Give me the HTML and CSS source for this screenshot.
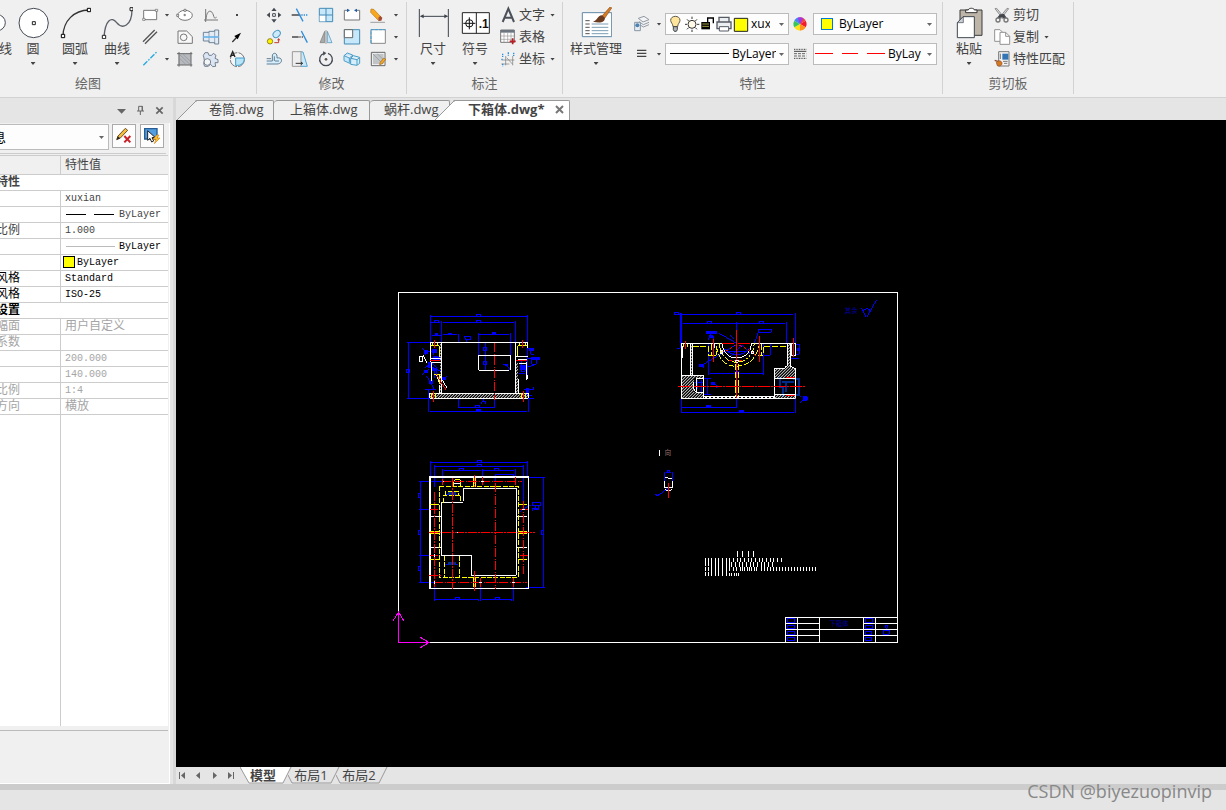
FILE: index.html
```html
<!DOCTYPE html>
<html lang="zh-CN">
<head>
<meta charset="utf-8">
<title>下箱体.dwg</title>
<link rel="stylesheet" href="styles.css">
</head>
<body>
<header class="ribbon">
  <section class="group group-draw">
    <div class="tools">
      <button class="big big-cut"><svg width="12" height="32" viewBox="0 21 36 96"><circle cx="-8" cy="68" r="24" fill="#fff" stroke="#444a54" stroke-width="3"/></svg><span class="cut-label">线</span></button>
      <button class="big"><svg width="32" height="32" viewBox="51 21 96 96"><circle cx="101" cy="69" r="44" fill="#fff" stroke="#444a54" stroke-width="3"/><path d="M97 65h9v9h-9z" fill="#fff" stroke="#222" stroke-width="3"/></svg><span>圆</span><i class="caret"></i></button>
      <button class="big"><svg width="32" height="32" viewBox="177 21 96 96"><path d="M189 108C190 62 222 31 267 30" fill="none" stroke="#333" stroke-width="4"/><path d="M184 103h10v10h-10zM262 25h10v10h-10z" fill="#fff" stroke="#000" stroke-width="3"/></svg><span>圆弧</span><i class="caret"></i></button>
      <button class="big"><svg width="32" height="32" viewBox="303 21 96 96"><path d="M312 110C316 60 334 48 350 68S396 80 396 28" fill="none" stroke="#5b6068" stroke-width="4"/><path d="M307 106h10v10h-10zM390 23h9v9h-9z" fill="#fff" stroke="#222" stroke-width="3"/></svg><span>曲线</span><i class="caret"></i></button>
      <div class="icons icons-draw">
        <button aria-label="矩形"><svg class="ic" viewBox="423 18 54 54"><path d="M431 31h39v28h-39z" fill="#fff" stroke="#777" stroke-width="3"/><path d="M428 55h7v6h-7zM466 28h7v6h-7z" fill="#fff" stroke="#666" stroke-width="2"/></svg></button>
        <i class="caret"></i>
        <button aria-label="椭圆"><svg class="ic" viewBox="528 18 54 54"><ellipse cx="555" cy="46" rx="22" ry="15" fill="#fff" stroke="#777" stroke-width="3"/><path d="M552 28h6v6h-6zM530 43h6v6h-6zM552 43h4v4h-4z" fill="#fff" stroke="#555" stroke-width="2"/></svg></button>
        <button aria-label="公式曲线"><svg class="ic" viewBox="606 18 54 54"><path d="M617 27v39M612 60h42M618 58C620 28 635 28 640 45S646 51 650 52" fill="none" stroke="#777" stroke-width="3"/></svg></button>
        <button aria-label="点"><svg class="ic" viewBox="684 18 54 54"><path d="M708 42h6v6h-6z" fill="#444"/></svg></button>
        <button aria-label="平行线"><svg class="ic" viewBox="423 84 54 54"><path d="M429 125l35-35M435 131l36-36" stroke="#555" stroke-width="4"/></svg></button>
        <i></i>
        <button aria-label="孔"><svg class="ic" viewBox="528 84 54 54"><path d="M534 93h26l17 17v20h-43z" fill="#f8f8f8" stroke="#777" stroke-width="3"/><circle cx="551" cy="112" r="10" fill="none" stroke="#777" stroke-width="3"/></svg></button>
        <button aria-label="轴"><svg class="ic" viewBox="606 84 54 54"><path d="M610 97h17v-3h17v-4h12v42h-12v-4h-17v-5h-17z" fill="#e3ecf4" stroke="#6f8498" stroke-width="3"/><path d="M627 95v32M644 91v40" stroke="#6f8498" stroke-width="2"/><path d="M609 111h48" stroke="#69b4ea" stroke-width="5"/></svg></button>
        <button aria-label="箭头"><svg class="ic" viewBox="684 84 54 54"><path d="M697 126l14-15" stroke="#333" stroke-width="4"/><path d="M723 98l-20 10 10 10z" fill="#000"/></svg></button>
        <button aria-label="中心线"><svg class="ic" viewBox="423 150 54 54"><path d="M430 196l40-40" stroke="#25a9e0" stroke-width="4" stroke-dasharray="17 4 5 4"/></svg></button>
        <i class="caret"></i>
        <button aria-label="剖面线"><svg class="ic" viewBox="528 150 54 54"><path d="M536 161h37v34h-37z" fill="#b6b9bd"/><path d="M537 156v44M573 156v44M531 161h46M531 195h46" stroke="#666" stroke-width="3"/><path d="M538 163l33 31M549 163l22 21M538 174l20 20" stroke="#8f9399" stroke-width="2"/></svg></button>
        <button aria-label="齿轮"><svg class="ic" viewBox="606 150 54 54"><path d="M615 158h9l3 8h8l5-6 8 6-3 9 9 4v9h-9l2 11-9 1-6-7-8 6h-10l-3-8 2-8-1-9-2-8z" fill="#dbe6f2" stroke="#758292" stroke-width="3"/><circle cx="622" cy="186" r="10" fill="#f5f5f5" stroke="#758292" stroke-width="3"/></svg></button>
        <button aria-label="局部放大"><svg class="ic" viewBox="684 150 54 54"><circle cx="712" cy="179" r="21" fill="#f5f5f5" stroke="#777" stroke-width="3" stroke-dasharray="30 4"/><path d="M707 174h26c0 14-8 24-26 22z" fill="#b8e4f8" stroke="#3f9dcc" stroke-width="3"/><path d="M691 171l7-16 7 16M693 166h9" fill="none" stroke="#222" stroke-width="4"/></svg></button>
      </div>
    </div>
    <h2>绘图</h2>
  </section>

  <section class="group group-modify">
    <div class="tools">
      <div class="icons icons-modify">
        <button aria-label="移动"><svg class="ic" viewBox="27 18 54 54"><path d="M54 23l8 10H46zM54 68l8-10H46zM32 45l10-8v16zM76 45l-10-8v16z" fill="#444a54"/><path d="M50 41h8v8h-8z" fill="#fff" stroke="#444a54" stroke-width="3"/></svg></button>
        <button aria-label="裁剪"><svg class="ic" viewBox="105 18 54 54"><path d="M107 45h26" stroke="#333" stroke-width="4"/><path d="M136 45h20" stroke="#2c8ddb" stroke-width="4" stroke-dasharray="4 3"/><path d="M121 26l20 38" stroke="#2c8ddb" stroke-width="4"/></svg></button>
        <button aria-label="阵列"><svg class="ic" viewBox="183 18 54 54"><path d="M190 25h40v40h-40z" fill="#c7e8fa" stroke="#458bb5" stroke-width="3"/><path d="M191 46h18v18h-18z" fill="#fff"/><path d="M210 25v40M190 45h40" stroke="#458bb5" stroke-width="3"/></svg></button>
        <button aria-label="打断"><svg class="ic" viewBox="261 18 54 54"><path d="M277 31h-12v29h46V31h-12" fill="#fff" stroke="#777" stroke-width="3"/><path d="M273 26l9 5-9 6zM303 26l-9 5 9 6z" fill="#1d5fa5"/></svg></button>
        <button aria-label="删除"><svg class="ic" viewBox="339 18 54 54"><path d="M345 27l8 1 24 25-9 9-24-25z" fill="#f7a81c" stroke="#b87412" stroke-width="2"/><path d="M367 53l6-6 6 7-3 8-8 1z" fill="#a54c39"/><path d="M343 67h44" stroke="#777" stroke-width="2"/></svg></button>
        <i class="caret"></i>
        <button aria-label="平移复制"><svg class="ic" viewBox="27 84 54 54"><ellipse cx="62" cy="102" rx="12" ry="9" transform="rotate(-40 62 102)" fill="#cceafa" stroke="#4d9ac5" stroke-width="3"/><circle cx="42" cy="124" r="8" fill="#fff200" stroke="#99871d" stroke-width="3"/><path d="M55 128h13v-9" fill="none" stroke="#c23b32" stroke-width="3"/><path d="M68 114l5 7H63z" fill="#c23b32"/></svg></button>
        <button aria-label="延伸"><svg class="ic" viewBox="105 84 54 54"><path d="M108 111h20" stroke="#333" stroke-width="4"/><path d="M130 111h14" stroke="#555" stroke-width="4" stroke-dasharray="4 3"/><path d="M136 93l18 35" stroke="#2c8ddb" stroke-width="4"/></svg></button>
        <button aria-label="镜像"><svg class="ic" viewBox="183 84 54 54"><path d="M206 94v34h-14z" fill="#aaa" stroke="#777" stroke-width="2"/><path d="M214 94v34h14z" fill="#c7e8fa" stroke="#458bb5" stroke-width="2"/><path d="M210 90v42" stroke="#777" stroke-width="2"/></svg></button>
        <button aria-label="缩放"><svg class="ic" viewBox="261 84 54 54"><path d="M265 89h46v43h-46z" fill="#c7e8fa" stroke="#458bb5" stroke-width="3"/><path d="M265 89h25v24h-25z" fill="#fff" stroke="#666" stroke-width="3"/></svg></button>
        <button aria-label="拉伸"><svg class="ic" viewBox="339 84 54 54"><path d="M345 89h43v41h-43z" fill="#fff" stroke="#888" stroke-width="3"/><path d="M345 130V89h43" fill="none" stroke="#39a0dc" stroke-width="3" stroke-dasharray="10 3"/></svg></button>
        <i class="caret"></i>
        <button aria-label="等距线"><svg class="ic" viewBox="27 150 54 54"><path d="M32 183h17v-15c0-11 14-11 14 1v5c18-4 18 18 0 18H32" fill="#d7edf9" stroke="#5f7e96" stroke-width="3"/><path d="M32 176h13M55 183v-14M57 183h12" stroke="#5f7e96" stroke-width="3"/></svg></button>
        <button aria-label="拉伸角"><svg class="ic" viewBox="105 150 54 54"><path d="M134 155l7 1 13 43h-20" fill="#c7e8fa" stroke="#58a6cf" stroke-width="3"/><path d="M109 155h26v44h-26z" fill="#eee" stroke="#999" stroke-width="3"/><path d="M119 190h20M135 186l5 4-5 4" fill="none" stroke="#333" stroke-width="3"/></svg></button>
        <button aria-label="旋转"><svg class="ic" viewBox="183 150 54 54"><path d="M204 160a19 19 0 1 0 12 0" fill="none" stroke="#444a54" stroke-width="4"/><path d="M201 154l10 5-9 8z" fill="#444a54"/><circle cx="210" cy="178" r="4" fill="#555"/></svg></button>
        <button aria-label="分解"><svg class="ic" viewBox="261 150 54 54"><path d="M264 167l10-8 16 6v19l-9 6-17-8zM264 167l16 7 10-8M280 174v14" fill="#c7e8fa" stroke="#4b9dc8" stroke-width="3"/><path d="M284 175l8-8 19 5v18l-8 6-19-3zM284 175l19 4 8-6M303 179v16" fill="#d8effb" stroke="#4b9dc8" stroke-width="3"/></svg></button>
        <button aria-label="编辑剖面线"><svg class="ic" viewBox="339 150 54 54"><path d="M346 157h41v40h-41z" fill="#fff" stroke="#666" stroke-width="3"/><path d="M350 161h33v32h-33z" fill="#c1c4c7"/><path d="M350 161l30 30M364 161l18 18" stroke="#8f9399" stroke-width="2"/><path d="M372 188l11-14 6 4-10 13-8 3z" fill="#f7a81c" stroke="#9b6728" stroke-width="2"/></svg></button>
        <i class="caret"></i>
      </div>
    </div>
    <h2>修改</h2>
  </section>

  <section class="group group-note">
    <div class="tools">
      <button class="big"><svg width="32" height="32" viewBox="483 21 96 96"><path d="M490 27v84M577 27v84M494 49h80" stroke="#3d434c" stroke-width="3"/><path d="M492 49l11-6v12zM576 49l-11-6v12z" fill="#3d434c"/></svg><span>尺寸</span><i class="caret"></i></button>
      <button class="big"><svg width="32" height="32" viewBox="609 21 96 96"><path d="M619 38h81v62h-81zM661 38v62" fill="#fff" stroke="#222" stroke-width="3"/><circle cx="640" cy="70" r="11" fill="none" stroke="#111" stroke-width="3"/><path d="M622 70h36M640 52v36" stroke="#111" stroke-width="3"/><text x="668" y="84" class="symbol-text">.1</text></svg><span>符号</span><i class="caret"></i></button>
      <div class="list">
        <button><svg class="ic" viewBox="729 18 54 54"><path d="M740 66l17-40 17 40M746 53h22" fill="none" stroke="#4c5058" stroke-width="6"/></svg><span>文字</span><i class="caret"></i></button>
        <button><svg class="ic" viewBox="729 84 54 54"><path d="M734 90h41v37h-41z" fill="#fff" stroke="#777" stroke-width="3"/><path d="M734 90h41v8h-41z" fill="#6c7580"/><path d="M744 98v29M755 98v29M765 98v29M734 108h41M734 118h41" stroke="#999" stroke-width="2"/><path d="M770 115v18M761 124h18" stroke="#b81e26" stroke-width="5"/></svg><span>表格</span></button>
        <button><svg class="ic" viewBox="729 150 54 54"><path d="M739 180h36M749 168v28M736 192h24M752 173l18 20M770 168v28" fill="none" stroke="#777" stroke-width="2"/><path d="M740 161v10M757 157v10M773 158v10M738 176v5M740 191v8" stroke="#2c8ddb" stroke-width="4" stroke-dasharray="5 2"/></svg><span>坐标</span><i class="caret"></i></button>
      </div>
    </div>
    <h2>标注</h2>
  </section>

  <section class="group group-props">
    <div class="tools">
      <button class="big big-wide"><svg width="32" height="32" viewBox="60 21 96 96"><path d="M67 38h88v72H67z" fill="#fff" stroke="#6088a5" stroke-width="3"/><path d="M76 62h13M76 72h13M76 82h13M76 92h13M76 101h13" stroke="#555" stroke-width="3"/><path d="M95 72h50M95 82h50M95 92h50M95 101h50" stroke="#7b9db5" stroke-width="3"/><path d="M151 20l4 4-21 31-8-7z" fill="#d97b22" stroke="#88501f" stroke-width="2"/><path d="M126 46l9 8c-2 16-18 15-36 11 14-3 12-18 27-19z" fill="#6b3b20"/></svg><span>样式管理</span><i class="caret"></i></button>
      <div class="prop-grid">
        <button aria-label="图层"><svg class="ic" viewBox="216 45 54 54"><path d="M235 55l17-6 15 10-18 7zM237 65l13 9 17-7M237 72l13 9 17-7" fill="#f2f4f6" stroke="#9299a3" stroke-width="3"/><path d="M224 67h17v25h-17z" fill="#e6edf3" stroke="#8996a3" stroke-width="3"/><circle cx="232" cy="76" r="6" fill="#4d83b3"/></svg></button>
        <i class="caret"></i>
        <div class="combo"><svg width="83" height="20" viewBox="318 42 249 60"><path d="M339 80c0-9-7-12-7-19 0-16 28-16 28 0 0 7-7 10-7 19z" fill="#ffe49b" stroke="#5d594e" stroke-width="3"/><path d="M340 80h12v9l-3 5h-6l-3-5z" fill="#b0b5b9" stroke="#444" stroke-width="3"/><circle cx="396" cy="73" r="12" fill="#fffbe8" stroke="#333" stroke-width="3"/><path d="M396 50v7M396 89v7M375 73h6M411 73h7M381 58l5 5M411 58l-5 5M381 88l5-5M411 88l-5-5" stroke="#333" stroke-width="3"/><path d="M424 66h26v22h-26z" fill="#000"/><path d="M427 72h20M427 79h20" stroke="#f2e85a" stroke-width="2"/><path d="M443 67V54h17v16" fill="none" stroke="#000" stroke-width="4"/><path d="M477 67V52h30v15M471 66h42v20h-42z" fill="#eceff1" stroke="#555b62" stroke-width="4"/><path d="M478 80h28v13h-28z" fill="#fff" stroke="#555b62" stroke-width="3"/><path d="M523 55h40v39h-40z" fill="#ff0" stroke="#222" stroke-width="3"/></svg><select class="select select-layer" aria-label="当前图层"><option>xuxian</option></select></div>
        <button aria-label="颜色"><svg class="ic" viewBox="696 45 54 54"><g transform="translate(720 72)"><path d="M0 0V-20A20 20 0 0 1 17-10Z" fill="#ef4444"/><path d="M0 0L17-10A20 20 0 0 1 17 10Z" fill="#f21b2b"/><path d="M0 0L17 10A20 20 0 0 1 0 20Z" fill="#ff941c"/><path d="M0 0V20A20 20 0 0 1-17 10Z" fill="#ffe11a"/><path d="M0 0L-17 10A20 20 0 0 1-17-10Z" fill="#37c657"/><path d="M0 0L-17-10A20 20 0 0 1 0-20Z" fill="#4288f5"/><path d="M0 0L-7-19A20 20 0 0 1 10-17Z" fill="#a437e4"/></g></svg></button>
        <div class="combo"><i class="swatch"></i><select class="select" aria-label="当前颜色"><option>ByLayer</option></select></div>
        <button aria-label="线宽"><svg class="ic" viewBox="216 135 54 54"><path d="M231 151h28M231 160h28M231 169h28" stroke="#444" stroke-width="4"/></svg></button>
        <i class="caret"></i>
        <div class="combo"><svg width="64" height="20" viewBox="0 0 64 20"><path d="M4 9h59v1H4z"/></svg><select class="select" aria-label="当前线宽"><option>ByLayer</option></select></div>
        <button aria-label="线型"><svg class="ic" viewBox="696 135 54 54"><path d="M702 148h37M702 175h37" stroke="#444" stroke-width="3" stroke-dasharray="3 2"/><path d="M702 154h37" stroke="#444" stroke-width="3"/><path d="M702 161h37M702 168h37" stroke="#666" stroke-width="3" stroke-dasharray="9 3"/></svg></button>
        <div class="combo"><svg width="72" height="20" viewBox="0 0 72 20"><path d="M1 9h18v1H1zM28 9h16v1H28zM53 9h18v1H53z" fill="red"/></svg><select class="select select-type" aria-label="当前线型"><option>ByLayer</option></select></div>
      </div>
    </div>
    <h2>特性</h2>
  </section>

  <section class="group group-clip">
    <div class="tools">
      <button class="big"><svg width="32" height="32" viewBox="69 21 96 96"><path d="M90 30h66v76H90z" fill="#bdb5a7" stroke="#3c3c3c" stroke-width="3"/><path d="M107 38v-8h8c0-7 18-7 18 0h8v8z" fill="#fff" stroke="#333" stroke-width="3"/><path d="M99 50h34v63H82V68z" fill="#fff" stroke="#3d4650" stroke-width="3"/><path d="M82 68l18-18v18z" fill="#ccd0d4" stroke="#3d4650" stroke-width="2"/></svg><span>粘贴</span><i class="caret"></i></button>
      <div class="list">
        <button><svg class="ic" viewBox="189 18 54 54"><path d="M195 26l5-1 23 28-5 3zM236 26l-5-1-23 28 5 3z" fill="#d6d8da" stroke="#666" stroke-width="2"/><path d="M210 43l12-1 8 11-7 3-8-5-8 5-6-3z" fill="#43474d"/><circle cx="204" cy="60" r="6" fill="#f3f3f3" stroke="#777" stroke-width="4"/><circle cx="228" cy="60" r="6" fill="#f3f3f3" stroke="#777" stroke-width="4"/></svg><span>剪切</span></button>
        <button><svg class="ic" viewBox="189 84 54 54"><path d="M194 89h16l9 9v26h-25z" fill="#fff" stroke="#929292" stroke-width="3"/><path d="M210 97h17l12 12v24h-29z" fill="#fff" stroke="#929292" stroke-width="3"/><path d="M227 97v12h12" fill="none" stroke="#929292" stroke-width="3"/></svg><span>复制</span><i class="caret"></i></button>
        <button><svg class="ic" viewBox="189 150 54 54"><path d="M206 155h31v43h-31z" fill="#f4f4f4" stroke="#777" stroke-width="3"/><path d="M217 161h18v18h-18z" fill="#3175b5"/><path d="M219 184h14M222 190h10M211 161v16" stroke="#777" stroke-width="3"/><path d="M194 181l12 4" stroke="#8c4935" stroke-width="4"/><path d="M199 187c8-8 16-4 17 2s-7 12-14 8z" fill="#d57920" stroke="#854829" stroke-width="2"/></svg><span>特性匹配</span></button>
      </div>
    </div>
    <h2>剪切板</h2>
  </section>
</header>

<main class="work">
  <aside class="panel">
    <div class="panel-bar">
      <button aria-label="菜单"><svg width="13" height="13" viewBox="345 27 39 39"><path d="M351 42h27l-13 14z" fill="#666"/></svg></button>
      <button aria-label="固定"><svg width="13" height="13" viewBox="402 27 39 39"><path d="M416 48V34h11v14M411 48h21M421 48v12" fill="none" stroke="#666" stroke-width="3"/><path d="M425 33h3v15h-3z" fill="#666"/></svg></button>
      <button aria-label="关闭"><svg width="13" height="13" viewBox="459 27 39 39"><path d="M469 37l19 19M488 37l-19 19" stroke="#666" stroke-width="5"/></svg></button>
    </div>
    <div class="panel-body">
      <div class="filter">
        <select class="select filter-select" aria-label="选择信息"><option>息</option></select>
        <button class="tool" aria-label="清除"><svg width="22" height="22" viewBox="339 90 66 66"><path d="M350 134l4-11 22-23 7 6-22 23z" fill="#f6bd3c" stroke="#6f5228" stroke-width="3"/><path d="M350 134l3-10 8 6z" fill="#222"/><path d="M373 123l18 19M391 123l-18 19" stroke="#c92127" stroke-width="6"/></svg></button>
        <button class="tool" aria-label="快速选择"><svg width="22" height="22" viewBox="423 90 66 66"><path d="M434 101h37v31h-37z" fill="#539de0" stroke="#255b93" stroke-width="4"/><path d="M443 107v29l7-6 5 11 6-3-5-10 9-1z" fill="#fff" stroke="#222" stroke-width="3"/><path d="M470 120l-11 13h9l-5 13 17-17h-9l6-9z" fill="#ffc329" stroke="#d38219" stroke-width="2"/></svg></button>
      </div>
      <div class="sheet">
        <table class="props">
          <colgroup><col class="col-name"><col></colgroup>
          <tr class="head"><th></th><th>特性值</th></tr>
          <tr class="section mid"><td colspan="2">特性</td></tr>
          <tr class="mid"><td></td><td>xuxian</td></tr>
          <tr class="mid"><td></td><td><svg class="line" width="50" height="3" viewBox="0 0 50 3"><path d="M1 1h20v1H1zM29 1h20v1H29z"/></svg> ByLayer</td></tr>
          <tr class="mid"><td>比例</td><td>1.000</td></tr>
          <tr><td></td><td><svg class="line" width="50" height="3" viewBox="0 0 50 3"><path d="M1 1h49v1H1z" fill="#bbb"/></svg> ByLayer</td></tr>
          <tr><td></td><td class="with-color"><i class="color"></i>ByLayer</td></tr>
          <tr><td>风格</td><td>Standard</td></tr>
          <tr><td>风格</td><td>ISO-25</td></tr>
          <tr class="section"><td colspan="2">设置</td></tr>
          <tr class="off"><td>幅面</td><td class="cjk">用户自定义</td></tr>
          <tr class="off"><td>系数</td><td></td></tr>
          <tr class="off"><td></td><td>200.000</td></tr>
          <tr class="off"><td></td><td>140.000</td></tr>
          <tr class="off"><td>比例</td><td>1:4</td></tr>
          <tr class="off"><td>方向</td><td class="cjk">横放</td></tr>
        </table>
      </div>
      <div class="hint"></div>
    </div>
  </aside>

  <section class="doc">
    <nav class="tabs">
      <svg class="slant" width="20" height="20" viewBox="0 0 20 20"><path d="M0 20L19 1H20V20z" fill="#f0f0f0"/><path d="M0 20L19 1M19 0h1v1h-1z" fill="#999" stroke="#999"/></svg>
      <button class="tab tab-first">卷筒.dwg</button>
      <button class="tab tab-second">上箱体.dwg</button>
      <button class="tab tab-third">蜗杆.dwg</button>
      <svg class="slant slant-active" width="20" height="20" viewBox="0 0 20 20"><path d="M0 20L19 1H20V20z" fill="#fff"/><path d="M0 20L19 1M19 0h1v1h-1z" fill="#999" stroke="#999"/></svg>
      <button class="tab tab-active">下箱体.dwg*<svg width="9" height="9" viewBox="0 0 9 9"><path d="M1 1l7 7M8 1l-7 7" stroke="#777" stroke-width="2"/></svg></button>
    </nav>

    <div class="canvas">
      <svg class="drawing" viewBox="176 120 1050 647" preserveAspectRatio="xMinYMin meet" shape-rendering="crispEdges">
        <defs>
          <pattern id="hatch" width="9" height="9" patternUnits="userSpaceOnUse"><path d="M-1 10L10-1" stroke="#fff" stroke-width="3"/></pattern>
          <g id="tag"><path d="M-6 4V-3H6V4" fill="none" stroke="#00f" stroke-width="3"/></g>
        </defs>
        <path class="w1" d="M398.500 292.500h499v350h-499z"/>

        <g transform="translate(395 285) scale(.33333) translate(.5 .5)">
          <g class="b">
            <path d="M106 91V172M397 91V172M106 94H397M139 109V172M361 109V172M106 112H136M145 112H358M112 151H139M145 148H186M190 148V172M250 145V256M346 145V214M250 148H343M271 175V256M40 172V341M36 172H106M36 340H418M100 316V382M400 341V382M106 379H397M190 341V370M298 341V370M190 367H298M397 175V270"/>
            <path d="M82 190l9 7v12M91 199h36M115 193v16M133 190v35M82 268l20-16M91 247l20-12 14 12v22M95 274l12 18 11 24M91 314h32M118 250v28M136 286l20-12M97 240l45 20M324 238h8l10 10v8M397 190h10v18h10M400 220h32M410 215v22h14v-12M379 228v30h12v-18M373 264h18M397 245l20-5M388 313h28v-6M400 310v20h12M208 154h18v10h-15zM214 164v8M260 358v-8h12v8M265 350v-8"/>
          </g>
          <g fill="#00f"><path d="M292 142h12v8h-12zM244 372h14v9h-14zM160 144h12v6h-12zM120 144h10v6h-10zM88 194h10v14h-10zM112 192h14v12h-14zM114 214h20v10h-20zM98 232h14v16h-14zM412 216h24v8h-24zM376 240h14v14h-14zM394 310h8v20h-8zM102 284h12v14h-12zM112 248h10v10h-10zM88 256h10v8h-10zM402 190h14v8h-14zM330 236h8v8h-8zM140 276h12v8h-12z"/></g>
          <use href="#tag" x="250" y="91"/><use href="#tag" x="123" y="109"/><use href="#tag" x="250" y="109"/><use href="#tag" x="246" y="364"/>
          <path class="b" d="M34 253h8v10h-8zM265 187h8v10h-8zM265 229h8v10h-8z"/>
          <path fill="url(#hatch)" d="M104 325h296v15H104zM134 172h7v153h-7zM361 235h9v90h-9z"/>
          <path class="w" d="M106 172H400M106 172V232M139 172V325M134 300V325M106 325H400M103 325V340M104 340H400V325M361 172V325M370 283V325M397 172V190M397 270V283H394V230M109 220h30M109 232h30M361 214h39M370 223h27M373 235h24M109 235v52M124 268l10 30M131 268l24 40M73 214h10v15H73zM84 211l12 24M250 211H345V220M250 211V253L255 256H343L347 250V220"/>
          <path class="y" d="M108 181h22l4 6v30M112 175v8M127 175v8M367 214v-30l4-3h24M374 175v8M391 175v8M118 268h15v30M109 325v15M121 325v15M379 325v15M391 325v15"/>
          <path class="r" d="M118 166v22M382 166v22M106 226h30M364 226h32M115 318v33M385 318v33M124 268l28 46"/><path class="r" stroke-dasharray="27 4 4 4" d="M298 175V346"/>
        </g>

        <g transform="translate(660 285) scale(.33333) translate(.5 .5)">
          <path class="b" d="M42 88H400M63 85V384M68 115H376M229 112V370M379 112V175M406 85V175M406 341V384M66 382H401M66 367H230M145 178V270M310 178V270M150 265H310M331 178V211H310M178 145l52 30M229 178l-110 66M120 238l12 10M294 133h39v9h-39zM294 142l-12 34M210 150l12 12M138 140h32M150 140v20M142 166l8-12h10v12M60 175v15h-8M190 190q40 40 80 0M204 200h52M214 210l32-30M247 180l25 28M132 280h20M132 328h20M142 280v48M152 296h14l5 14M108 284h20v38M118 290v20M408 178h10v30h-14M394 220h22M416 330l8 6M420 352l8-8h16M428 335h14v10h-14"/>
          <path d="M138 138h32v9h-32zM412 188h7v9h-7zM226 258h10v8h-10zM138 360h15v8h-15zM237 375h15v8h-15zM59 85h6v91h-6zM148 150h12v10h-12zM118 238h14v8h-14zM428 335h14v9h-14zM152 292h14v8h-14z" fill="#00f"/>
          <use href="#tag" x="49" y="85"/><use href="#tag" x="235" y="85"/><use href="#tag" x="148" y="112"/><use href="#tag" x="304" y="112"/>
          <path d="M360 276v30h10v30M366 290h36M378 290v30M400 282h16v48h-14" fill="none" stroke="#002a8c" stroke-width="6"/>
          <path fill="url(#hatch)" d="M65 272h66v68H65zM344 250h63v30h-63zM344 328h63v14h-63zM91 178h7v94h-7zM381 178h12v72h-12z"/>
          <path d="M102 280h28v42h-28z"/>
          <path class="b" d="M104 292h24M112 286v26M124 284v36"/>
          <path class="w" d="M64 175H187M273 175H408M64 175V340H406V328M67 184V220M91 178V272M97 178V272M64 271H131V334M109 280h22M109 280v42h22M100 290v20l9 12M131 334H343M131 340v-6M343 340V250H375V244H382V178M391 178V244L406 250V340M394 178V211H408M406 175V210M344 280H406M344 328H406M187 178C190 232 270 232 273 178M163 178v10"/>
          <path d="M136 340H344" stroke="#fff" stroke-width="3"/>
          <path d="M136 337H344" stroke="#fff" stroke-width="3" stroke-dasharray="6 6"/>
          <path class="y" stroke-dasharray="18 5" d="M98 184H145V211H169V184M178 175C181 250 277 250 282 175M169 184C181 275 290 250 294 184M294 211H310V184H380M227 238V334M235 238V334M154 178v32M304 178v32M70 178v8M83 178v8"/>
          <path class="r" stroke-dasharray="36 4 4 4" d="M54 304H438M187 175H270"/><path class="r" d="M229 136V340M160 162V232M298 154V232M76 168V192M400 160V215M378 277H406M378 331H406"/><path class="r" stroke-dasharray="9 5" d="M184 204l40-24M238 180l40 24M208 225h42M280 205l8 8"/>
          <path class="w" d="M180 196h8v8h-8zM274 198h7v7h-7zM227 225h7v7h-7z"/>
          <path class="b" d="M604 69l15 28 30-52M610 82c-2-14 20-16 20-2"/>
          <text x="554" y="84" class="cad-text">其余</text>
        </g>

        <g transform="translate(395 450) scale(.33333) translate(.5 .5)">
          <path class="b" d="M106 34V84M397 34V84M106 37H397M118 46V112M385 46V180M118 49H385M142 58V98M361 58V98M148 61H258M265 61H358M262 58V92M301 73H356V78M301 73V95M76 95V397M72 94H142M72 178H118M72 316H118M72 397H118M446 83V412M394 83H450M394 412H450M118 400V452M256 400V452M355 400V452M121 448H251V452M260 448H350V452M373 185l20-13 15-7M412 157h25v10h-24zM420 166v15M430 166v14M412 184v-8h18M150 132h36M148 343h42"/>
          <use href="#tag" x="254" y="34"/><use href="#tag" x="254" y="46"/><use href="#tag" x="200" y="58"/><use href="#tag" x="305" y="58"/><use href="#tag" x="187" y="445"/><use href="#tag" x="306" y="445"/>
          <path class="b" d="M78 130h-8v13h8M78 241h-8v13h8M78 349h-8v12h8M447 241h-8v13h8M324 72h12M416 178h14"/>
          <path d="M162 126h18v8h-18zM160 337h22v6h-22z" fill="#002a8c" stroke="#002a8c" stroke-width="4"/>
          <path d="M104 81H400V415H104z" fill="none" stroke="#fff" stroke-width="5"/>
          <path class="w" d="M106 199H139M139 157V316H229V376H364V115H205V154L201 157H139M106 292H139M364 199H397M364 292H397M176 100h20"/>
          <path class="y" stroke-dasharray="15 4" d="M133 109H370V382H133zM145 158V136H196V158M151 136V124H190V136M149 318V382M194 318V382"/>
          <path class="y" d="M106 163h27M106 244h27M106 250h27M106 328h27M370 163h27M370 244h27M370 250h27M370 328h27M235 84v25M241 84v25M235 382v30M241 382v30M175 109V94l5-6h12l5 6v15"/>
          <path class="r" stroke-dasharray="27 4 4 4" d="M142 94H382M102 247H420M118 397H396M118 126V412M172 84V418M301 100V418M385 154V372M102 376H142M238 75V112M238 363V424M142 88V104M262 80V106M361 80V104M256 385V415M355 385V415M375 178H400M375 316H400M106 178H130M106 316H130"/>
          <path d="M186 246h3v3h-3zM144 93h4v4h-4zM258 93h8v3h-8zM381 177h8v4h-8zM117 313h4v8h-4zM117 393h4v8h-4zM253 396h8v3h-8zM351 396h8v3h-8z" fill="#fff"/>
        </g>
        <path d="M398.500 642.500V613M398.500 642.500H429" stroke="#f0f" stroke-width="1"/><path d="M393 621l5.500-9 5.500 9M420 637l9 5.500-9 5.500" fill="none" stroke="#f0f"/>

        <g transform="translate(640 435) scale(.33333) translate(.5 .5)">
          <path class="w" d="M58 45v18M73 138v22M97 138v22M73 128h10l4 3h10M73 157h24M76 163l9 6 10-6"/>
          <text x="74" y="60" class="view-text">向</text>
          <path class="b" d="M73 112v25M97 112v25M78 112h16M82 112v-6h7v6M88 155l-22 18-18 10M46 178l10 4"/><path class="r" d="M85 144v45"/>
          <g stroke="#fff" fill="none">
            <path stroke-width="17" stroke-dasharray="3 13" d="M291 357H345"/>
            <path stroke-width="12" stroke-dasharray="3 6" d="M195 375H207"/><path stroke-width="12" stroke-dasharray="3 8" d="M213 375H430"/>
            <path stroke-width="12" stroke-dasharray="3 6" d="M195 388H207"/><path stroke-width="14" stroke-dasharray="3 8" d="M213 388H270M274 388H400"/>
            <path stroke-width="12" stroke-dasharray="3 6" d="M195 402H207"/><path stroke-width="12" stroke-dasharray="3 8" d="M213 402H270M278 402H306"/><path stroke-width="10" stroke-dasharray="3 4" d="M306 402H355"/><path stroke-width="10" stroke-dasharray="3 6" d="M364 402H534"/>
            <path stroke-width="12" stroke-dasharray="3 6" d="M195 416H207"/><path stroke-width="14" stroke-dasharray="3 8" d="M213 416H265"/><path stroke-width="8" stroke-dasharray="3 4" d="M267 418H300"/>
          </g>
          <path class="w" d="M436 547H773M436 547V622M472 547V622M538 547V622M670 547V622M706 547V622M436 565H538M436 583H773M436 601H538M670 565H773M670 601H773"/>
          <path class="b" d="M442 550h22v12h-22zM442 571h22v10h-22zM442 589h22v10h-22zM442 607h22v10h-22zM676 550h22v12h-22zM676 571h22v10h-22zM676 589h19v10h-19zM676 607h19v10h-19zM730 586h18v12h-18zM737 570h4v10h-4z"/>
          <text x="568" y="574" class="cad-text">下箱体</text>
        </g>
      </svg>
    </div>

    <nav class="sheets">
      <button class="nav" aria-label="首页"><svg width="9" height="9" viewBox="0 0 9 9"><path d="M1 1h1v7H1zM7 1v7L3 4.500z" fill="#666"/></svg></button>
      <button class="nav" aria-label="上一页"><svg width="9" height="9" viewBox="0 0 9 9"><path d="M6 1v7L2 4.500z" fill="#666"/></svg></button>
      <button class="nav" aria-label="下一页"><svg width="9" height="9" viewBox="0 0 9 9"><path d="M3 1v7l4-3.500z" fill="#666"/></svg></button>
      <button class="nav" aria-label="末页"><svg width="9" height="9" viewBox="0 0 9 9"><path d="M7 1h1v7H7zM2 1v7l4-3.500z" fill="#666"/></svg></button>
      <button class="sheet-tab sheet-active"><svg class="shape" viewBox="0 0 52 17" preserveAspectRatio="none"><path d="M0 0L9 16H43L51 0" fill="#fff" stroke="#999"/></svg><span>模型</span></button>
      <button class="sheet-tab"><svg class="shape" viewBox="0 0 52 17" preserveAspectRatio="none"><path d="M0 8L4 16H43L51 0" fill="none" stroke="#999"/></svg><span>布局1</span></button>
      <button class="sheet-tab"><svg class="shape" viewBox="0 0 52 17" preserveAspectRatio="none"><path d="M0 8L4 16H43L51 0" fill="none" stroke="#999"/></svg><span>布局2</span></button>
    </nav>
  </section>
</main>
<footer class="status"><span class="watermark">CSDN @biyezuopinvip</span></footer>
</body>
</html>
```

FILE: styles.css
```css
* { box-sizing: border-box; }
body {
  margin: 0;
  height: 100vh;
  display: flex;
  flex-direction: column;
  overflow: hidden;
  background: #e5e5e5;
  color: #444;
  font: 13px/18px "Open Sans", "Noto Sans CJK SC", sans-serif;
}
button, select { font: inherit; color: inherit; }
button { border: 0; padding: 0; background: none; }
svg { display: block; flex: none; }

/* Ribbon */
.ribbon {
  display: flex;
  background: #f0f0f0;
  border-bottom: 1px solid #d2d2d2;
  padding: 2px 0 3px;
}
.group {
  display: flex;
  flex-direction: column;
  flex: none;
  height: 92px;
  border-right: 1px solid #d2d2d2;
}
.group h2 {
  margin: 0;
  font-size: 13px;
  line-height: 18px;
  font-weight: 400;
  text-align: center;
  color: #666;
}
.tools { display: flex; height: 72px; }
.group-draw { width: 257px; }
.group-draw h2 { padding-right: 80px; }
.group-modify { width: 150px; }
.group-modify .tools { padding-left: 4px; }
.group-note { width: 156px; }
.group-note .tools, .group-clip .tools { padding-left: 5px; }
.group-props { width: 380px; }
.group-clip { width: 131px; }

.big {
  display: flex;
  flex-direction: column;
  align-items: center;
  width: 42px;
  padding-top: 5px;
  white-space: nowrap;
}
.big .caret { margin-top: 5px; }
.big-wide { width: 66px; }
.big-cut { width: 12px; overflow: hidden; }
.big-cut span { margin-left: -2px; }
.cut-label { align-self: flex-end; }

.caret {
  width: 5px;
  height: 3px;
  background: #444;
  clip-path: polygon(0 0, 100% 0, 50% 100%);
}
.ic { width: 18px; height: 18px; }
.icons {
  display: grid;
  grid-auto-rows: 22px;
  align-content: start;
  align-items: center;
  justify-items: center;
  padding-top: 2px;
}
.icons-draw { grid-template-columns: 24px 10px 26px 26px 26px; }
.icons-modify { grid-template-columns: repeat(5, 26px) 10px; }
.list { display: flex; flex-direction: column; padding: 2px 0 0 3px; }
.list button {
  display: flex;
  align-items: center;
  gap: 2px;
  height: 22px;
  white-space: nowrap;
}
.list span { padding-bottom: 2px; }
.list .caret { margin-left: 3px; }
.symbol-text { font: bold 36px "Liberation Sans", sans-serif; fill: #111; }

.prop-grid {
  display: grid;
  grid-template-columns: 24px 12px 124px 24px 124px;
  grid-auto-rows: 22px;
  row-gap: 8px;
  align-content: start;
  align-items: center;
  justify-items: center;
  padding-top: 11px;
}
.combo {
  display: flex;
  align-items: center;
  width: 100%;
  height: 22px;
  background: #fdfdfd;
  border: 1px solid #bbb;
}
.select {
  appearance: none;
  flex: 1;
  min-width: 0;
  height: 20px;
  border: 0;
  border-radius: 0;
  padding: 0 12px 0 2px;
  color: #000;
  font-size: 12px;
  background: url("data:image/svg+xml,%3Csvg xmlns='http://www.w3.org/2000/svg' width='5' height='3'%3E%3Cpath d='M0 0h5L2.5 3z' fill='%23666'/%3E%3C/svg%3E") no-repeat right 4px center;
}
.select-layer { padding-right: 18px; }
.select-type { padding-right: 15px; }
.swatch {
  width: 12px;
  height: 12px;
  margin: 0 4px 0 7px;
  background: #ff0;
  border: 1px solid #0078d7;
}

/* Property panel */
.work { display: flex; flex: 1; min-height: 0; }
.panel {
  display: flex;
  flex-direction: column;
  flex: none;
  width: 176px;
  padding-right: 3px;
  border-right: 3px solid #d8d8d8;
}
.panel-bar {
  display: flex;
  justify-content: flex-end;
  align-items: center;
  height: 25px;
  padding-right: 1px;
}
.panel-bar button { display: grid; place-items: center; width: 19px; }
.panel-body {
  display: flex;
  flex-direction: column;
  flex: 1;
  min-height: 0;
  padding-right: 3px;
  background: #f0f0f0;
  border-right: 1px solid #fff;
  border-bottom: 1px solid #fff;
}
.filter {
  display: flex;
  align-items: flex-start;
  gap: 3px;
  height: 31px;
  padding: 1px 2px 0 0;
  overflow: hidden;
  border-bottom: 1px solid #ccc;
}
.filter-select {
  height: 26px;
  margin-left: -8px;
  padding-left: 0;
  border: 1px solid #bbb;
  background-color: #fdfdfd;
  font-size: 13px;
}
.tool {
  width: 24px;
  height: 24px;
  border: 1px solid #aaa;
  background: #fdfdfd;
}
.tool + .tool { margin-left: 1px; }
.sheet {
  flex: 1;
  min-height: 0;
  overflow: hidden;
  margin-top: 1px;
  margin-right: -2px;
  border-top: 1px solid #ccc;
  background: linear-gradient(#ccc, #ccc) 60px 0 / 1px 100% no-repeat #fff;
}
.props {
  width: 100%;
  table-layout: fixed;
  border-collapse: separate;
  border-spacing: 0;
  color: #000;
  font: 10px/15px "Liberation Mono", "Noto Sans CJK SC", monospace;
}
.col-name { width: 61px; }
.props td, .props th {
  height: 16px;
  padding: 0 0 0 4px;
  overflow: hidden;
  white-space: nowrap;
  background: #fff;
  border-bottom: 1px solid #ccc;
}
.props td:first-child {
  padding: 2px 0 0;
  text-indent: -4px;
  font-size: 12px;
  line-height: 13px;
}
.props td:first-child:not([colspan]), .props th:first-child { border-right: 1px solid #ccc; }
.props .cjk { padding-top: 2px; font-size: 12px; line-height: 13px; }
.props .head th {
  height: 19px;
  padding-top: 3px;
  background: #f0f0f0;
  text-align: left;
  font-size: 12px;
  font-weight: 400;
  color: #444;
}
.props .mid { color: #444; }
.props .section td { font-weight: 700; }
.props .off { color: #a5a5a5; }
.line { display: inline-block; vertical-align: middle; margin-right: -2px; }
.props .with-color { padding-left: 2px; }
.color {
  display: inline-block;
  width: 12px;
  height: 12px;
  margin-right: 2px;
  vertical-align: middle;
  background: #ff0;
  border: 1px solid #000;
}
.hint { height: 53px; margin: 4px -2px 0 0; border-top: 1px solid #bbb; }

/* Document area */
.doc { display: flex; flex-direction: column; flex: 1; min-width: 0; }
.tabs { display: flex; align-items: flex-end; height: 22px; padding-left: 1px; }
.tab {
  height: 20px;
  padding: 0 0 2px 12px;
  background: #f0f0f0;
  border: solid #999;
  border-width: 1px 1px 0 0;
  border-radius: 0 2px 0 0;
  line-height: 17px;
  white-space: nowrap;
  text-align: left;
}
.tab-first { width: 77px; }
.tab-second { width: 96px; padding-left: 16px; border-top-left-radius: 4px; }
.tab-third { width: 80px; padding-left: 14px; border-top-left-radius: 4px; }
.tab-active {
  display: flex;
  align-items: center;
  justify-content: space-between;
  width: 115px;
  padding: 0 5px 2px 13px;
  background: #fff;
  font-weight: 700;
}
.slant-active { position: relative; margin-left: -15px; }
.canvas { flex: 1; min-height: 0; background: #000; }
.drawing { width: 100%; height: 100%; }
.w, .w1, .b, .y, .r { fill: none; stroke-width: 3; }
.w, .w1 { stroke: #fff; }
.w1 { stroke-width: 1; }
.b { stroke: #00f; }
.y { stroke: #ff0; }
.r { stroke: #f00; }
.cad-text { font: 19px "Noto Sans CJK SC", sans-serif; fill: #0000a0; }
.view-text { font: 19px "Noto Sans CJK SC", sans-serif; fill: #a07870; }

.sheets { display: flex; height: 17px; }
.nav { display: grid; place-items: center; width: 16px; }
.nav:first-child { margin-left: -2px; }
.sheet-tab {
  position: relative;
  width: 52px;
  margin-left: -4px;
  padding: 0 6px 2px 0;
  line-height: 14px;
  white-space: nowrap;
}
.sheet-tab span { position: relative; }
.sheet-active { margin-left: 2px; font-weight: 700; }
.shape { position: absolute; inset: 0; width: 100%; height: 100%; }

.status {
  position: relative;
  flex: none;
  height: 26px;
  border-top: 6px solid #ccc;
}
.watermark {
  position: absolute;
  right: 14px;
  bottom: 7px;
  font-size: 18px;
  line-height: 24px;
  color: #888;
}
```
